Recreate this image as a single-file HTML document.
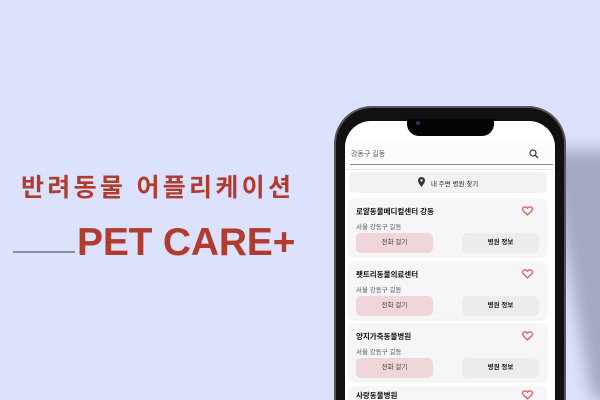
<!DOCTYPE html>
<html><head><meta charset="utf-8"><style>
*{margin:0;padding:0;box-sizing:border-box}
html{width:600px;height:400px;overflow:hidden}
body{width:600px;height:400px;overflow:hidden;background:#dce1fc;position:relative;font-family:"Liberation Sans","Noto Sans CJK KR",sans-serif}
.t1{position:absolute;left:21px;top:168px;font-size:25px;font-weight:bold;color:#b23b2f;letter-spacing:3.3px;white-space:nowrap}
.t2{position:absolute;left:77px;top:221px;font-size:39px;font-weight:bold;color:#b23b2f;white-space:nowrap;letter-spacing:-0.2px}
.line{position:absolute;left:13px;top:251px;width:62px;height:2px;background:#8a8d9c}
.shwrap{position:absolute;left:540px;top:120px;width:60px;height:280px;overflow:hidden}
.shadow{position:absolute;left:8px;top:30px;width:100px;height:250px;background:#a3a9c3;filter:blur(8px);transform:skewX(10deg);transform-origin:top left}
.phone{position:absolute;left:334px;top:106px;width:232px;height:294px;background:#111;border-radius:38px 38px 0 0;border:2px solid #555;border-bottom:none}
.screen{position:absolute;left:345px;top:121px;width:210px;height:279px;background:#fff;border-radius:26px 26px 0 0;overflow:hidden}
.notch{position:absolute;left:407px;top:119px;width:87px;height:17px;background:#050505;border-radius:0 0 12px 12px}
.cam{position:absolute;left:416px;top:121px;width:4px;height:4px;border-radius:50%;background:#1b3a6b}
.s{position:absolute;font-size:7px;color:#222;white-space:nowrap}
.card{position:absolute;left:348px;width:199px;height:58px;background:#f6f6f9;border-radius:6px;box-shadow:0 1px 2px rgba(0,0,0,.08)}
.card .n{position:absolute;left:8px;top:8px;font-size:7.5px;font-weight:bold;color:#111}
.card .a{position:absolute;left:8px;top:23px;font-size:6.5px;color:#555}
.card .b1{position:absolute;left:8px;top:35px;width:77px;height:20px;background:#f0d6d8;border-radius:5px;font-size:6.5px;color:#444;text-align:center;line-height:20px}
.card .b2{position:absolute;left:114px;top:35px;width:77px;height:20px;background:#ececef;border-radius:5px;font-size:6.5px;font-weight:bold;color:#222;text-align:center;line-height:20px}
.card svg{position:absolute;left:174px;top:8px}
.last{overflow:hidden;box-shadow:none}
.last .n{top:5px;line-height:9px;height:9px;overflow:hidden}
.last svg{top:4px}
</style></head><body>
<div class="t1">반려동물 어플리케이션</div>
<div class="line"></div>
<div class="t2">PET CARE+</div>
<div class="shwrap"><div class="shadow"></div></div>
<div class="phone"></div>
<div class="screen"></div>
<div class="notch"></div>
<div class="cam"></div>
<div style="position:absolute;left:348px;top:140px;width:204px;height:28px;background:#fcfbfd"></div>
<div class="s" style="left:351px;top:149px;font-size:7px;color:#555">강동구 길동</div>
<svg style="position:absolute;left:529px;top:149px" width="10" height="10" viewBox="0 0 10 10"><circle cx="4" cy="4" r="3" fill="none" stroke="#333" stroke-width="1.2"/><path d="M6.2 6.2L9 9" stroke="#333" stroke-width="1.3"/></svg>
<div style="position:absolute;left:350px;top:164px;width:203px;height:1px;background:#8a8a92"></div>
<div style="position:absolute;left:346px;top:169px;width:208px;height:1px;background:#e8e8ec"></div>
<div style="position:absolute;left:349px;top:172px;width:198px;height:21px;background:#f2f2f4;border-radius:5px"></div>
<svg style="position:absolute;left:418px;top:177px" width="7" height="10" viewBox="0 0 7 10"><path d="M3.5 0C1.5 0 0 1.5 0 3.4 0 6 3.5 10 3.5 10S7 6 7 3.4C7 1.5 5.5 0 3.5 0z" fill="#333"/><circle cx="3.5" cy="3.4" r="1.2" fill="#f2f2f4"/></svg>
<div class="s" style="left:431px;top:178px;font-size:6.5px">내 주변 병원 찾기</div>

<div class="card" style="top:198px"><div class="n">로얄동물메디컬센터 강동</div><div class="a">서울 강동구 길동</div><div class="b1">전화 걸기</div><div class="b2">병원 정보</div><svg width="11" height="10" viewBox="0 0 11 10"><path d="M5.5 9L1.3 4.8C0.2 3.7 0.4 1.8 1.8 1.1 3 0.5 4.5 1 5.5 2.3 6.5 1 8 0.5 9.2 1.1 10.6 1.8 10.8 3.7 9.7 4.8z" fill="none" stroke="#e2453c" stroke-width="1.1"/></svg></div>
<div class="card" style="top:261px"><div class="n">펫트리동물의료센터</div><div class="a">서울 강동구 길동</div><div class="b1">전화 걸기</div><div class="b2">병원 정보</div><svg width="11" height="10" viewBox="0 0 11 10"><path d="M5.5 9L1.3 4.8C0.2 3.7 0.4 1.8 1.8 1.1 3 0.5 4.5 1 5.5 2.3 6.5 1 8 0.5 9.2 1.1 10.6 1.8 10.8 3.7 9.7 4.8z" fill="none" stroke="#e2453c" stroke-width="1.1"/></svg></div>
<div class="card" style="top:323px"><div class="n">양지가축동물병원</div><div class="a">서울 강동구 길동</div><div class="b1">전화 걸기</div><div class="b2">병원 정보</div><svg width="11" height="10" viewBox="0 0 11 10"><path d="M5.5 9L1.3 4.8C0.2 3.7 0.4 1.8 1.8 1.1 3 0.5 4.5 1 5.5 2.3 6.5 1 8 0.5 9.2 1.1 10.6 1.8 10.8 3.7 9.7 4.8z" fill="none" stroke="#e2453c" stroke-width="1.1"/></svg></div>
<div class="card last" style="top:386px;height:14px;border-radius:6px 6px 0 0"><div class="n">사랑동물병원</div><svg width="11" height="10" viewBox="0 0 11 10"><path d="M5.5 9L1.3 4.8C0.2 3.7 0.4 1.8 1.8 1.1 3 0.5 4.5 1 5.5 2.3 6.5 1 8 0.5 9.2 1.1 10.6 1.8 10.8 3.7 9.7 4.8z" fill="none" stroke="#e2453c" stroke-width="1.1"/></svg></div>
</body></html>
